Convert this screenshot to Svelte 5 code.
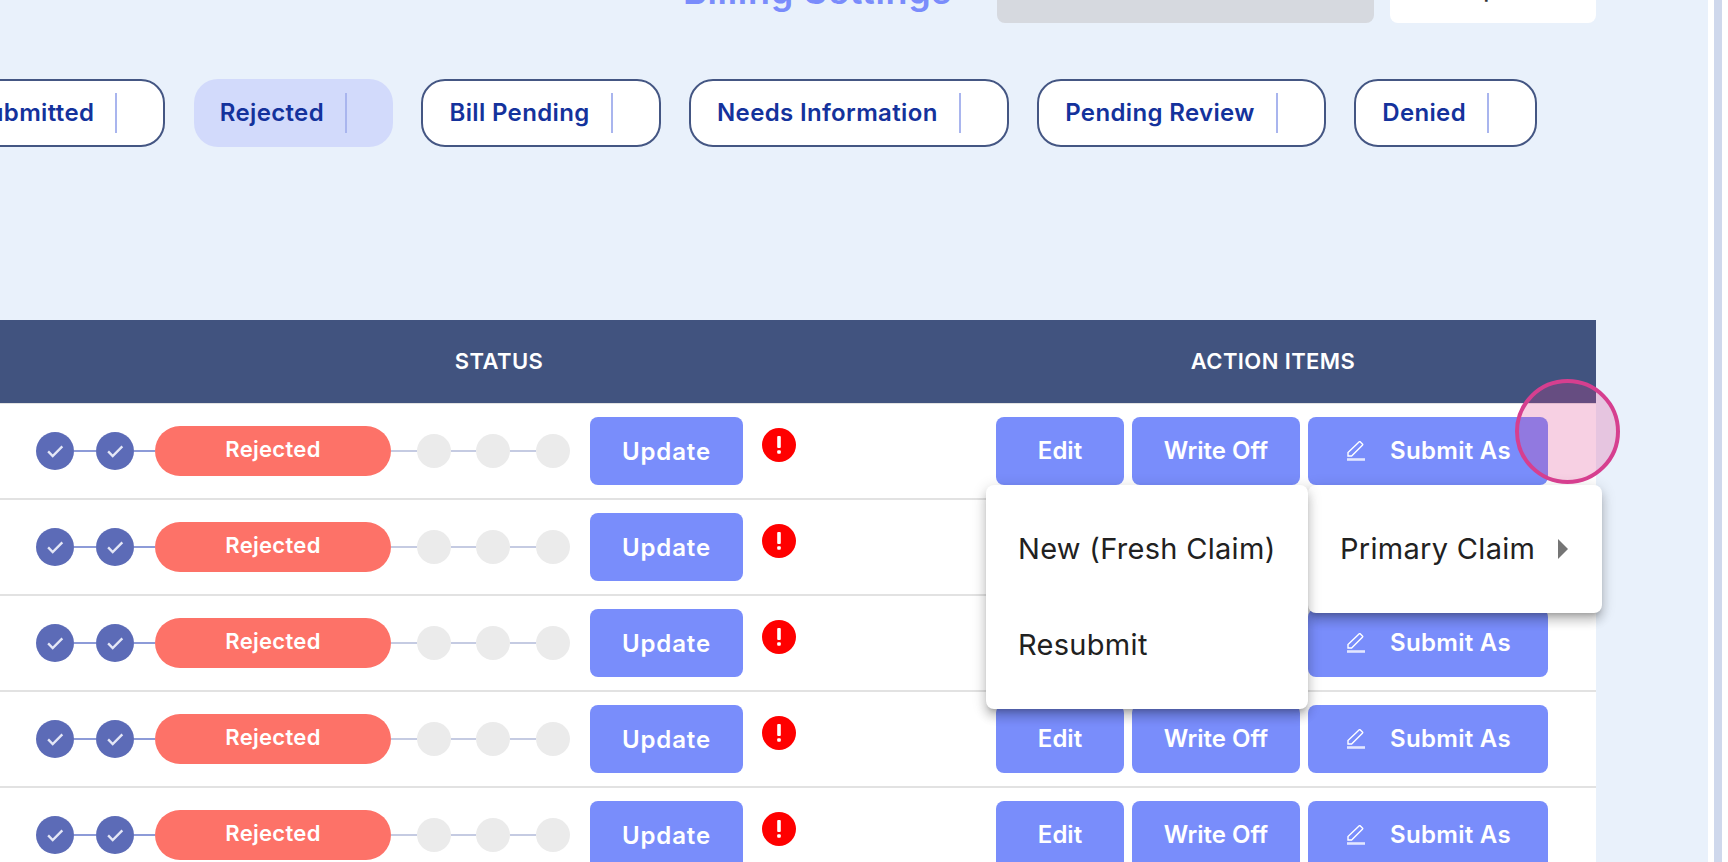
<script lang="ts">
  const tabs = ['Submitted', 'Rejected', 'Bill Pending', 'Needs Information', 'Pending Review', 'Denied'];
  const rows = [1, 2, 3, 4, 5];
  let activeTab = $state('Rejected');
</script>

<div class="page">
  <main class="content">
    <div class="topbar">
      <span class="billing">Billing Settings</span>
      <div class="search"></div>
      <button class="export">Export</button>
    </div>

    <div class="tabs">
      {#each tabs as tab}
        <button class="tab" class:active={tab === activeTab} onclick={() => (activeTab = tab)}>
          <span>{tab}</span>
          <i class="tab-divider"></i>
        </button>
      {/each}
    </div>

    <div class="table">
      <div class="thead">
        <div>STATUS</div>
        <div>ACTION ITEMS</div>
      </div>

      {#each rows as row}
        <div class="row">
          <div class="stepper">
            {#each [1, 2] as step}
              <span class="step done">
                <svg viewBox="0 0 24 24" width="22" height="22" fill="none" stroke="#e4e7f6" stroke-width="2.6"><path d="M4.5 12.5l5 5L20 7" /></svg>
              </span>
              <i class="line done-line"></i>
            {/each}
            <span class="current">Rejected</span>
            {#each [1, 2, 3] as step}
              <i class="line todo-line"></i>
              <span class="step todo"></span>
            {/each}
          </div>

          <button class="btn update">Update</button>
          <span class="alert" aria-label="Rejected claim">
            <svg viewBox="0 0 34 34" width="34" height="34">
              <circle cx="17" cy="17" r="17" fill="#ff0000" />
              <rect x="15.2" y="8" width="3.6" height="12" rx="1" fill="#fff" />
              <rect x="15.2" y="22.2" width="3.6" height="3.6" rx="1" fill="#fff" />
            </svg>
          </span>

          <div class="actions">
            <button class="btn edit">Edit</button>
            <button class="btn write-off">Write Off</button>
            <button class="btn submit">
              <svg viewBox="0 0 18 20" width="18" height="20" fill="none" stroke="#fff" stroke-width="1.4">
                <path d="M1 15v-3.5L12 .9a1 1 0 0 1 1.4 0l2 2a1 1 0 0 1 0 1.4L4.6 15z" />
                <path d="M0 18.5h18" stroke="#e3e7ff" stroke-width="2.6" />
              </svg>
              <span>Submit As</span>
            </button>
          </div>
        </div>
      {/each}
    </div>

    <div class="menu second-menu">
      <div class="menu-item">
        <span>Primary Claim</span>
        <svg class="caret" viewBox="0 0 10 20" width="10" height="20"><path d="M0 0l10 10L0 20z" fill="#757575" /></svg>
      </div>
    </div>
    <div class="menu first-menu">
      <div class="menu-item">New (Fresh Claim)</div>
      <div class="menu-item">Resubmit</div>
    </div>
  </main>
  <div class="scrollbar"></div>

  <div class="click-mark"></div>
</div>

<style>
  :global(body) {
    background: #fff;
    font-family: 'Inter', 'Open Sans', sans-serif;
  }

  .page {
    position: relative;
    display: flex;
    height: 862px;
    overflow: hidden;
  }

  .content {
    position: relative;
    width: 1708px;
    flex-shrink: 0;
    background: #e9f1fb;
    overflow: hidden;
  }

  .scrollbar {
    width: 8px;
    margin-left: 6px;
    background: #cfd8ec;
  }

  .topbar {
    display: flex;
    align-items: center;
    height: 60px;
    margin-top: -37px;
    padding-left: 683px;
  }

  .billing {
    width: 314px;
    padding-bottom: 4px;
    font-size: 36px;
    font-weight: 600;
    letter-spacing: 0.7px;
    color: #7a8cfb;
    white-space: nowrap;
  }

  .search {
    width: 377px;
    height: 60px;
    flex-shrink: 0;
    background: #d6d9df;
    border-radius: 8px;
  }

  .export {
    width: 206px;
    height: 60px;
    flex-shrink: 0;
    margin-left: 16px;
    padding-bottom: 10px;
    background: #fff;
    border: none;
    border-radius: 8px;
    font: 500 24px 'Inter', sans-serif;
    color: #333;
  }

  .tabs {
    display: flex;
    justify-content: flex-end;
    gap: 28.5px;
    height: 68px;
    margin-top: 56px;
    padding-right: 171px;
  }

  .tab {
    display: flex;
    align-items: center;
    flex-shrink: 0;
    height: 68px;
    padding: 0 0 2px 26px;
    box-sizing: border-box;
    background: #fff;
    border: 2px solid #445683;
    border-radius: 24px;
    font: 600 24px 'Inter', sans-serif;
    letter-spacing: 0.35px;
    color: #14329c;
    white-space: nowrap;
  }

  .tab.active {
    background: #d2dafb;
    border: none;
  }

  .tab-divider {
    width: 2px;
    height: 40px;
    margin: 2px 46px 0 21px;
    background: #a9b5ee;
  }

  .table {
    width: 1596px;
    margin-top: 173px;
    background: #fff;
  }

  .thead {
    display: grid;
    grid-template-columns: 998px 550px;
    align-items: center;
    height: 84px;
    padding-bottom: 2px;
    box-sizing: border-box;
    border-bottom: 1px solid #e2e2e2;
    background: #41537f;
    color: #fff;
    font-size: 22px;
    font-weight: 600;
    letter-spacing: 0.4px;
    text-align: center;
  }

  .row {
    display: flex;
    align-items: center;
    height: 96px;
    padding: 0 48px 0 36px;
    box-sizing: border-box;
    border-bottom: 2px solid #e2e2e2;
  }

  .stepper {
    display: flex;
    align-items: center;
    width: 534px;
    flex-shrink: 0;
  }

  .step {
    display: flex;
    align-items: center;
    justify-content: center;
    border-radius: 50%;
    flex-shrink: 0;
  }

  .step.done {
    width: 38px;
    height: 38px;
    background: #5c6bb7;
  }

  .step.todo {
    width: 34px;
    height: 34px;
    background: #ebebeb;
  }

  .line {
    height: 2px;
  }

  .done-line {
    width: 21.5px;
    flex-shrink: 0;
    background: #8d9bd8;
  }

  .todo-line {
    flex: 1;
    background: #c5cbe2;
  }

  .current {
    width: 236px;
    height: 50px;
    flex-shrink: 0;
    border-radius: 25px;
    background: #fd7268;
    color: #fff;
    font-size: 22px;
    font-weight: 600;
    letter-spacing: 0.3px;
    line-height: 47px;
    text-align: center;
  }

  .btn {
    height: 68px;
    padding-bottom: 2px;
    background: #798dfb;
    color: #fff;
    border: none;
    border-radius: 8px;
    font: 600 24px 'Inter', sans-serif;
    flex-shrink: 0;
  }

  .update {
    width: 153px;
    margin-left: 20px;
    padding-bottom: 0;
    letter-spacing: 0.9px;
  }

  .alert {
    display: flex;
    margin: 0 0 12px 19px;
  }

  .actions {
    display: flex;
    gap: 8px;
    margin-left: auto;
  }

  .edit {
    width: 128px;
  }

  .write-off {
    width: 168px;
  }

  .submit {
    display: flex;
    align-items: center;
    justify-content: center;
    gap: 25px;
    width: 240px;
    padding-left: 8px;
    letter-spacing: 0.3px;
  }

  .menu {
    position: absolute;
    top: 485px;
    padding: 16px 0;
    box-sizing: border-box;
    background: #fff;
    border-radius: 8px;
    box-shadow: 0 5px 5px -3px rgba(0, 0, 0, 0.2), 0 8px 10px 1px rgba(0, 0, 0, 0.14), 0 3px 14px 2px rgba(0, 0, 0, 0.12);
    font-size: 29px;
    letter-spacing: 0.3px;
    color: #212121;
  }

  .first-menu {
    left: 986px;
    width: 322px;
    height: 224px;
  }

  .second-menu {
    left: 1308px;
    width: 294px;
    height: 128px;
  }

  .menu-item {
    display: flex;
    align-items: center;
    gap: 23px;
    height: 96px;
    padding: 0 0 2px 32px;
    box-sizing: border-box;
    white-space: nowrap;
  }

  .caret {
    margin-top: 2px;
  }

  .click-mark {
    position: absolute;
    left: 1515px;
    top: 379px;
    width: 105px;
    height: 105px;
    box-sizing: border-box;
    border: 4px solid #d63f8f;
    border-radius: 50%;
    background: rgba(221, 60, 140, 0.24);
  }
</style>
